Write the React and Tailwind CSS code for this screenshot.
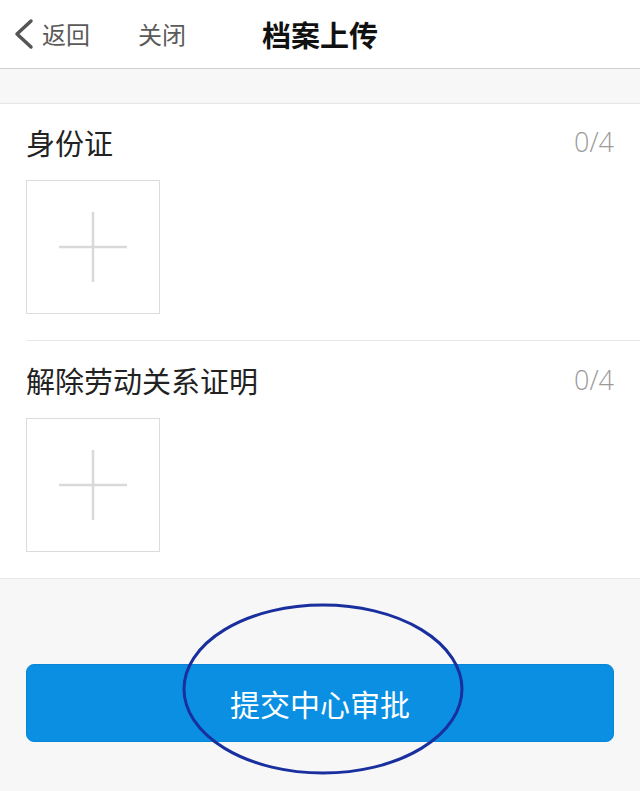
// Archive upload page — two upload slots and a submit button
const font = { fontFamily: '"Noto Sans CJK SC", "Noto Sans", sans-serif' };

function UploadSlot() {
  return (
    <div className="w-[134px] h-[134px] border border-[#dcdcdc] bg-white flex items-center justify-center">
      <svg width="68" height="70" viewBox="0 0 68 70">
        <path d="M0 35H68M34 0V70" stroke="#d9d9d9" strokeWidth="2.5" fill="none" />
      </svg>
    </div>
  );
}

function Section({ title, last }) {
  return (
    <div className="pl-[26px]">
      <div className={`pr-[26px] ${last ? "pt-[21px]" : "pt-[20px] border-b border-[#e8e8e8]"} pb-[26px]`}>
        <div className="flex items-center justify-between h-[36px]">
          <span className="text-[29px] leading-[36px] text-[#222]">{title}</span>
          <span className="text-[27px] leading-[36px] text-[#9a9a9a] font-light" style={{ fontFamily: '"Open Sans", "Noto Sans", sans-serif' }}>0/4</span>
        </div>
        <div className="mt-[20px]">
          <UploadSlot />
        </div>
      </div>
    </div>
  );
}

export default function App() {
  return (
    <div className="relative w-full min-h-[791px] bg-[#f7f7f8]" style={font}>
      {/* header */}
      <div className="h-[69px] bg-white border-b border-[#cfcfcf] grid grid-cols-[1fr_auto_1fr] items-center">
        <div className="flex items-center pl-[12px]">
          <svg width="22" height="32" viewBox="0 0 22 32">
            <path d="M19 3L5 16L19 29" stroke="#555" strokeWidth="3.5" fill="none" strokeLinecap="round" strokeLinejoin="round" />
          </svg>
          <span className="ml-[8px] text-[24px] text-[#5a5a5a] leading-none">返回</span>
          <span className="ml-[48px] text-[24px] text-[#5a5a5a] leading-none">关闭</span>
        </div>
        <span className="text-[29px] font-bold text-[#111] leading-none">档案上传</span>
        <div />
      </div>

      {/* spacer band */}
      <div className="h-[35px] border-b border-[#e6e6e6]" />

      <div className="bg-white border-b border-[#e8e8e8]">
        <Section title="身份证" />
        <Section title="解除劳动关系证明" last />
      </div>

      <div className="px-[26px] pt-[85px]">
        <button className="w-full h-[78px] rounded-[8px] bg-[#0a8fe3] border border-[#0a86d6] text-white text-[30px] leading-none">
          提交中心审批
        </button>
      </div>

      {/* hand-drawn annotation circle */}
      <svg className="absolute left-[181px] top-[603px] pointer-events-none" width="286" height="174" viewBox="0 0 286 174">
        <ellipse cx="142" cy="86" rx="139" ry="84" stroke="#1a2f9e" strokeWidth="3" fill="none" />
      </svg>
    </div>
  );
}
